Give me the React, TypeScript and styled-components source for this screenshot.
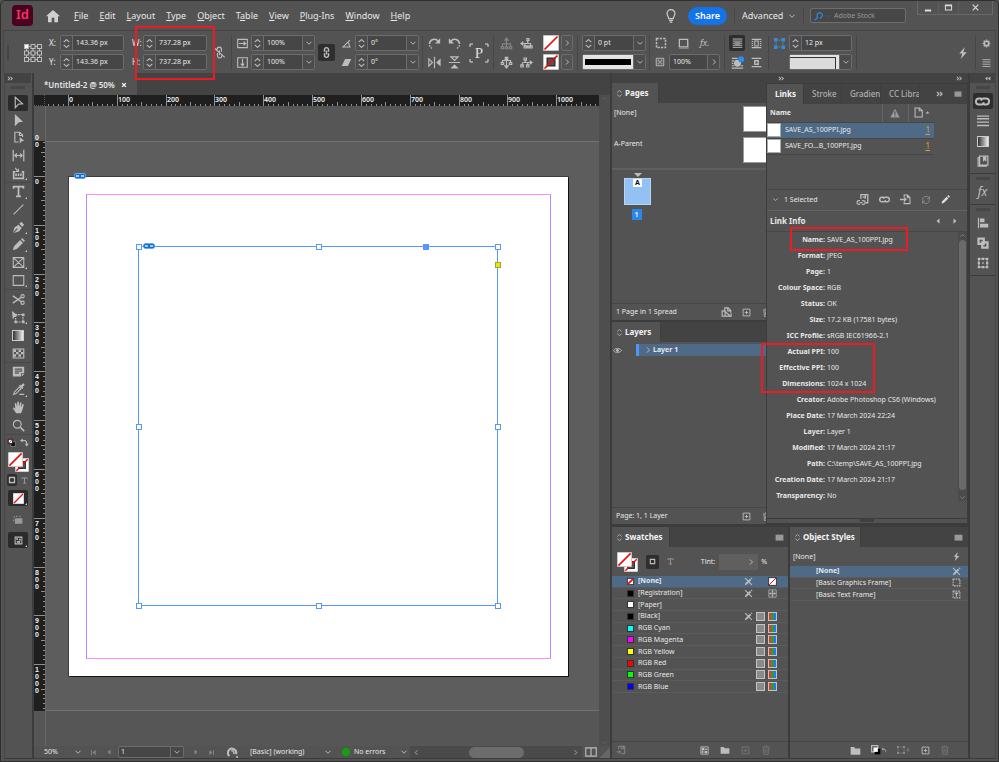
import React from 'react';
import styled, { createGlobalStyle } from 'styled-components';

const c = {
  bg: '#535353',
  dark: '#434343',
  line: '#464646',
  edge: '#3c3c3c',
  field: '#464646',
  fieldEdge: '#6c6c6c',
  text: '#e8e8e8',
  icon: '#bdbdbd',
  select: '#4f6a87',
  red: '#ec1c24',
  blue: '#5598f5',
};

const GlobalStyle = createGlobalStyle`
  *, *::before, *::after { box-sizing: border-box; }
  body { margin: 0; background: ${c.bg}; }
  body, button, input, select {
    font-family: "Noto Sans", "Open Sans", sans-serif;
    font-size: 7px;
    line-height: 10px;
    color: ${c.text};
  }
  button, input, select { margin: 0; padding: 0; border: 0; background: none; }
  ul, dl, dd, h2 { margin: 0; padding: 0; list-style: none; }
`;

/* ---------- icons ---------- */

const solid = { fill: 'currentColor', stroke: 'none' };

const glyphs: Record<string, React.ReactNode> = {
  down: <path d="M3 5.5l5 5 5-5" strokeWidth="1.900" />,
  right: <path d="M6 3l5 5-5 5" strokeWidth="1.900" />,
  left: <path d="M10 3L5 8l5 5" strokeWidth="1.900" />,
  up: <path d="M3 10.5l5-5 5 5" strokeWidth="1.900" />,
  spin: <path d="M3 5.5L8 1l5 4.500M3 10.500L8 15l5-4.500" strokeWidth="1.900" />,
  more: <path d="M2 4l4 4-4 4M8 4l4 4-4 4" strokeWidth="2.400" />,
  less: <path {...solid} d="M8 3.500v9L2.500 8zM14.500 3.500v9L9 8z" />,
  home: <path {...solid} d="M8 1L0 8.300h2.300V15H6.500v-5h3v5h4.200V8.300H16z" />,
  bulb: (
    <>
      <path d="M5.500 11C5.500 9 3.500 8 3.500 5.200a4.500 4.500 0 0 1 9 0C12.500 8 10.500 9 10.500 11z" />
      <path d="M5.800 13h4.400M6.500 15h3" />
    </>
  ),
  min: <path d="M3 12h10" strokeWidth="3" />,
  max: <path d="M2.500 3.500h11v9h-11zM2.500 5h11" strokeWidth="1.800" />,
  close: <path d="M3 3l10 10M13 3L3 13" strokeWidth="2" />,
  closeBold: <path d="M3 3l10 10M13 3L3 13" strokeWidth="3.400" />,
  search: <path d="M1 15l5-5M6 10a4.300 4.300 0 1 1 3 1.300" strokeWidth="1.800" />,
  unlink: <path d="M5 6V4a2.700 2.700 0 0 1 5.400 0v3M5.500 8.500V12a2.700 2.700 0 0 0 5.400 0v-1.500M8 5.500V11M1.500 2.500l13 11.500" />,
  chainV: <path d="M5.500 7V4.500a2.500 2.500 0 0 1 5 0V7M5.500 9v2.500a2.500 2.500 0 0 0 5 0V9M8 5.500v5" strokeWidth="1.800" />,
  chain: <path d="M7 4.800H4.200a3.200 3.200 0 0 0 0 6.400h2.600c1.500 0 2.500-1 2.700-2.400M9 11.200h2.800a3.200 3.200 0 0 0 0-6.400H9.200C7.700 4.800 6.700 5.800 6.500 7.200" strokeWidth="2" />,
  scaleX: <path d="M1 2h14v12H1zM3 8h9M9.500 5.500L12.500 8l-3 2.500" strokeWidth="1.600" />,
  scaleY: <path d="M1 1h14v14H1zM8 3v9M5.500 9.500L8 12.500l2.500-3" strokeWidth="1.600" />,
  angle: <path d="M13 3L3 13h11M10 6c2 2 2.300 4 2.300 7" strokeWidth="1.600" />,
  shear: <path {...solid} d="M6 3h9l-5 10H1z" />,
  cw: (
    <>
      <path d="M5 14A6.200 6.200 0 0 1 1.800 8" strokeWidth="1.600" strokeDasharray="2 1.200" />
      <path d="M1.800 8.500A6 6 0 0 1 12.500 5" strokeWidth="1.800" />
      <path {...solid} d="M15 1.500V8H8.500z" />
    </>
  ),
  ccw: (
    <>
      <path d="M11 14A6.200 6.200 0 0 0 14.200 8" strokeWidth="1.600" strokeDasharray="2 1.200" />
      <path d="M14.200 8.500A6 6 0 0 0 3.500 5" strokeWidth="1.800" />
      <path {...solid} d="M1 1.500V8h6.500z" />
    </>
  ),
  flipH: (
    <>
      <path d="M8 1v14M1 3.500v9L5.500 8z" />
      <path {...solid} d="M15.500 3v10L10 8z" />
    </>
  ),
  flipV: (
    <>
      <path d="M1 8h14M3.500 1h9L8 5.500z" />
      <path {...solid} d="M3 15.500h10L8 10z" />
    </>
  ),
  treeUp: (
    <>
      <path d="M8 4v9M3 12V8.500h10V12M1.500 12h3v2.500h-3zM6.500 12h3v2.500h-3zM11.500 12h3v2.500h-3z" />
      <path {...solid} d="M8 0l3.500 4.500h-7z" />
    </>
  ),
  treeDown: (
    <>
      <path d="M8 1v11M3 9V5.500h10V9M1.500 8h3v2.500h-3zM11.500 8h3v2.500h-3zM6.500 1.500h3v3h-3z" />
      <path {...solid} d="M8 16l3.500-4.500h-7z" />
    </>
  ),
  treeLeft: (
    <>
      <path d="M3 8h4M9.500 4v4M6 12V8h7v4M5 11h2.500v2.500H5zM9 11h2v2.500H9zM12.500 11H15v2.500h-2.500zM8.500 2h2.500v2.500H8.500z" />
      <path {...solid} d="M0 8l4-3v6z" />
    </>
  ),
  treeRight: (
    <>
      <path d="M13 8H3M6.500 4v4M3 12V8M9.500 8v4M1 11h3v2.500H1zM8 11h3v2.500H8zM5 2.500h3V5H5z" />
      <path {...solid} d="M16 8l-4-3v6z" />
    </>
  ),
  frameDots: (
    <>
      <path d="M2 2h12v12H2z" strokeDasharray="3 1.500" strokeWidth="1.600" />
      <path {...solid} d="M0 0h4v4H0zM12 0h4v4h-4zM0 12h4v4H0zM12 12h4v4h-4z" />
    </>
  ),
  shadowBox: (
    <>
      <path d="M2 2h12v11H2z" strokeWidth="1.800" />
      <path d="M1.500 15.200h13.500V4" stroke="#8a8a8a" strokeWidth="1.300" />
    </>
  ),
  opacity: (
    <>
      <path d="M2 2h12v12H2z" strokeWidth="1.500" />
      <path {...solid} opacity=".7" d="M4 4h3v3H4zM9 4h3v3H9zM6.500 6.500h3v3h-3zM4 9h3v3H4zM9 9h3v3H9z" />
    </>
  ),
  wrapNone: (
    <>
      <path d="M1 1.500h14M1 4.500h14M1 7.500h14M1 10.500h14M1 13.500h14" strokeWidth="1.400" />
      <path {...solid} fill="#8f8f8f" d="M4.500 5.200h7v5h-7z" />
    </>
  ),
  wrapBox: <path d="M1 2h14M1 14h14M1 5h2M1 8h2M1 11h2M13 5h2M13 8h2M13 11h2M5.500 4.500h5v7h-5z" strokeWidth="1.500" />,
  wrapShape: (
    <>
      <path d="M1 3h7M1 6h3M1 9h2M1 12h3M1 15h14M12 12h3" strokeWidth="1.400" />
      <circle {...solid} cx="8" cy="9" r="4.300" />
      <circle cx="12.500" cy="4" r="3.800" fill="#2a8cf0" stroke="none" />
    </>
  ),
  wrapJump: <path d="M1 2h14M1 14h14M5.500 5.500h5v5h-5z" strokeWidth="2" />,
  blueFrame: (
    <>
      <path d="M3 3h10v10H3z" stroke="#8f8f8f" strokeDasharray="2 1.500" />
      <path fill="#2a8cf0" stroke="none" d="M0 0h5v5H0zM11 0h5v5h-5zM0 11h5v5H0zM11 11h5v5h-5z" />
    </>
  ),
  bolt: <path {...solid} d="M10.500 0L3 8.500h4L5 16l8-9H8.500z" />,
  gear: (
    <>
      <circle cx="8" cy="8" r="4" strokeWidth="3" />
      <path d="M8 1v2M8 13v2M1 8h2M13 8h2M3 3l1.500 1.500M11.500 11.500L13 13M13 3l-1.500 1.500M4.500 11.500L3 13" strokeWidth="2.200" />
    </>
  ),
  menu: <path d="M1 3h14M1 7h14M1 11h14M1 15h14" strokeWidth="1.500" />,
  panelMenu: <path {...solid} d="M1 3h14v10.500H1z" />,
  arrowOpen: <path d="M4 1.500l9 8-5 .5-4 4.500z" />,
  arrowFill: <path {...solid} d="M3.500 0l10 9.500-5 .5-5 5z" />,
  pageTool: (
    <>
      <path d="M13 7.500V5L9.500 1.500H3.500v12H8M9 2v3.500h4" />
      <path {...solid} d="M9.500 7.500L15 12l-3 .5-2.500 3z" />
    </>
  ),
  gap: <path d="M1.500 1v14M14.500 1v14M4 8h8M6 5.500L3.500 8 6 10.500M10 5.500L12.500 8 10 10.500" strokeWidth="1.500" />,
  collect: (
    <>
      <path d="M2 6v8h12V6M5 11V8M8 11V8M11 11V8M1 6h3M12 6h3" strokeWidth="1.900" />
      <path d="M4 1l3 4M8 2v3.500H4.500" />
    </>
  ),
  type: <path d="M2 4.500V2h12v2.500M8 2v12M5 14h6" strokeWidth="2.200" />,
  line: <path d="M2 14L14 2" strokeWidth="1.400" />,
  pen: (
    <>
      <path {...solid} d="M1 15L3 8l5-3.500 4 4L8.500 13zM9 3.500L11.500 1 15 4.500 12.500 7z" />
      <path d="M1.500 14.500L6.500 9.500" stroke="#535353" />
    </>
  ),
  pencil: <path {...solid} d="M1 15l1.500-5L10 2.500 13.500 6 6 13.500zM11 1.500L12.500 0 16 3.500 14.500 5z" />,
  rectX: <path d="M1.500 2h13v12h-13zM1.500 2l13 12M14.500 2l-13 12" strokeWidth="1.300" />,
  rect: <path d="M1.500 2h13v12h-13z" strokeWidth="1.300" />,
  scissors: (
    <>
      <circle cx="13" cy="4" r="2" />
      <circle cx="13" cy="12" r="2" />
      <path d="M1 3.500l10.500 7.300M1 12.500L11.500 5.200" strokeWidth="1.700" />
    </>
  ),
  transform: (
    <>
      <path d="M4.500 4.500h9v9h-9z" strokeDasharray="2 1" />
      <path {...solid} d="M0 0l7 5.500-3 .5-3 4zM12.500 3h3v3h-3zM12.500 12h3v3h-3zM3 12h3v3H3z" />
    </>
  ),
  checker: (
    <>
      <path d="M1.500 2.500h13v11h-13z" />
      <path {...solid} d="M2 3h3v3H2zM8 3h3v3H8zM5 6h3v3H5zM11 6h3v3h-3zM2 9h3v3H2zM8 9h3v3H8z" />
    </>
  ),
  note: (
    <>
      <path {...solid} d="M1 2h14v8h-4v4H1zM12 11h3l-3 3z" />
      <path d="M3.500 5h9M3.500 7.500h9M3.500 10h5" stroke="#535353" />
    </>
  ),
  dropper: (
    <>
      <path d="M2 14l1-3 6-6 2 2-6 6zM9 14h6" />
      <path {...solid} d="M8.500 3.500L10 2l1 1 2-2c1.500-1.500 3 .5 2 2l-2 2 1 1-1.500 1.500z" />
    </>
  ),
  hand: <path {...solid} d="M5 15L1 8.500c.5-1 1.500-.5 3 1L3.500 3c.8-1 1.700-.5 1.900.5L6.300 7l.2-5.500c.5-1 1.600-1 2 0L8.800 7l1.200-5c.7-.8 1.700-.4 1.700.6L11 7.500l2-3.500c1-.6 1.700.2 1.400 1.200L12.500 12 11 15z" />,
  zoom: (
    <>
      <circle cx="6.500" cy="6.500" r="4.800" />
      <path d="M10.200 10.200L15 15" strokeWidth="2" />
    </>
  ),
  defaults: (
    <>
      <path d="M6 6h7.500v7.500H6z" fill="#111" stroke="#999" strokeWidth="1" />
      <path d="M2 2h7v7H2z" fill="#fff" stroke="#111" strokeWidth="1.500" />
      <path d="M3 8l5-5" stroke="#e33" />
    </>
  ),
  swap: (
    <>
      <path d="M4 4.500h4c3 0 4 1.500 4 6" strokeWidth="1.800" />
      <path {...solid} d="M5 1v7L0 4.500zM8.500 10h7L12 15z" />
    </>
  ),
  square: <path d="M3 3h10v10H3z" strokeWidth="2.600" />,
  view: <path {...solid} d="M3 5h12v9H3zM1 2h2v2H1zM5 1h2v2H5zM10 1h2v2h-2zM0 7h2v2H0z" />,
  screen: (
    <>
      <path d="M2 2h12v12H2z" strokeWidth="1.800" />
      <path {...solid} d="M4 4h3v3H4zM9 5h3v3H9zM5 9h6v3H5z" />
    </>
  ),
  plus: <path d="M2 2h12v12H2zM8 5v6M5 8h6" strokeWidth="1.600" />,
  trash: <path d="M2 3.500h12M6 3V1.500h4V3M3.500 4l.8 11h7.400l.8-11M6.500 6v7M9.500 6v7" strokeWidth="1.300" />,
  pageSize: <path d="M1.500 6.500h4v7h-4zM5.500 13.500h8V9.500M5 8V2.500h4.500L13 6v3M9 3v3.500h3.500M6 8l6 5" strokeWidth="1.500" />,
  eye: (
    <>
      <path d="M1 8c3-5 11-5 14 0-3 5-11 5-14 0z" strokeWidth="1.600" />
      <circle {...solid} cx="8" cy="8" r="2.600" />
    </>
  ),
  warn: (
    <>
      <path {...solid} d="M8 1l7.500 14H.5z" />
      <path d="M8 5.500v5M8 12v1.500" stroke="#444" strokeWidth="1.600" />
    </>
  ),
  page: <path d="M3 1.500h6.500L13.500 5v9.500H3zM9 2v3.500h4" strokeWidth="1.500" />,
  triUp: <path {...solid} d="M2 11h12L8 4z" />,
  cloudLink: (
    <>
      <path d="M6 7V2h8.500v10H12M8 5h3.500M11.500 2v5" strokeWidth="1.600" />
      <path d="M5 9.500H3.500a2.200 2.200 0 0 0 0 4.500H5M7.500 9.500H9a2.200 2.200 0 0 1 0 4.500H7.500M4.500 11.800H8" strokeWidth="1.500" />
    </>
  ),
  goTo: (
    <>
      <path d="M6 5V1.500h5L14.500 5v9H6V11M10.500 2v3.500H14" strokeWidth="1.500" />
      <path d="M0 8h7" strokeWidth="2" />
      <path {...solid} d="M6 4.500L10 8l-4 3.500z" />
    </>
  ),
  refresh: <path d="M2.500 9A5.700 5.700 0 0 1 13 5M13.500 7A5.700 5.700 0 0 1 3 11M13.500 2v4h-4M2.500 14v-4h4" strokeWidth="1.500" />,
  edit: <path {...solid} d="M1 15l1-4 8-8 3 3-8 8zM11 2l2-2 3 3-2 2z" />,
  triL: <path {...solid} d="M12 1v14L4 8z" />,
  triR: <path {...solid} d="M4 1v14l8-7z" />,
  firstP: (
    <>
      <path d="M3.500 2v12" strokeWidth="2" />
      <path {...solid} d="M13 2v12L5.500 8z" />
    </>
  ),
  lastP: (
    <>
      <path d="M12.500 2v12" strokeWidth="2" />
      <path {...solid} d="M3 2v12l7.500-6z" />
    </>
  ),
  preflight: (
    <>
      <path d="M3.500 13A6 6 0 1 1 13 10.500" strokeWidth="3" />
      <path d="M6 5.500c3-1 4.500 1 4 5" strokeWidth="2.200" />
      <path {...solid} d="M13.500 13h2.500v2.500h-2.500z" />
    </>
  ),
  split: <path d="M1 2.500h14v11H1zM8 2.500v11" strokeWidth="1.500" />,
  noEdit: (
    <>
      <path {...solid} d="M1.500 14.500l1-3.500 8-8 2.500 2.500-8 8zM12 2l1.500-1L15 2.500 14 4z" />
      <path d="M2 2l12 12" strokeWidth="1.800" />
    </>
  ),
  registration: <path d="M1.500 1.500h13v13h-13zM8 1.500v13M1.500 8h13M8 4.500a3.500 3.500 0 1 0 .01 0" strokeWidth="1.300" />,
  strokeLines: <path d="M0 1.500h16M0 5h16M0 9.500h16M0 14h16" strokeWidth="1.900" />,
  book: (
    <>
      <path d="M3.500 1.500h11v12h-11zM3.500 3.500h-2v11.500h11v-1.500" strokeWidth="1.600" />
      <path {...solid} d="M8 2h4.500v7l-2.200-2L8 9z" />
    </>
  ),
  align: (
    <>
      <path d="M2 1v14" strokeWidth="1.600" />
      <path {...solid} d="M4 2h6v5H4zM4 9h11v5H4z" />
    </>
  ),
  pathfinder: <path d="M2 2h7v7H2zM7 7h7v7H7z" strokeWidth="3" />,
  transformBox: (
    <>
      <path d="M2.500 2.500h11v11h-11z" strokeWidth="1.300" />
      <path {...solid} d="M1 1h3v3H1zM6.500 1h3v3h-3zM12 1h3v3h-3zM1 6.500h3v3H1zM12 6.500h3v3h-3zM1 12h3v3H1zM6.500 12h3v3h-3zM12 12h3v3h-3zM7 7h2v2H7z" />
    </>
  ),
  folder: <path {...solid} d="M1 3h5l1.500 2H15v9H1z" />,
  importIcon: <path d="M4 6V2h10v12H8M8 2v4h4V2M1 11h6M4.500 8.500L7.500 11l-3 2.500" strokeWidth="1.600" />,
  swatchView: (
    <>
      <path d="M1.500 1.500h13v13h-13z" strokeWidth="1.500" />
      <path {...solid} d="M3 3h5v5H3zM9 5h4v2H9zM3 9h3v4H3zM8 9h5v4H8z" />
    </>
  ),
  frameT: (
    <>
      <path d="M2 2h12v12H2z" strokeWidth="1.800" strokeDasharray="3 1.500" />
      <path d="M4.500 5.500h7M8 5.500V12" strokeWidth="2" />
    </>
  ),
  frameG: <path d="M2 2h12v12H2z" strokeWidth="2" strokeDasharray="3 1.500" />,
  clearO: (
    <>
      <path d="M1 1h10v10H1z" fill="#555" strokeWidth="1.800" />
      <path fill="#000" stroke="none" d="M6 6h9v9H6z" />
      <path fill="#fff" stroke="none" d="M4 4h7v7H4z" />
    </>
  ),
  undo: <path d="M4 2v5h5M4 7c6-4 11 1 7 7" strokeWidth="1.800" />,
  grid9: (
    <>
      <path d="M3.500 3.500h13v13h-13zM10 3.500v13M3.500 10h13" strokeWidth="1" />
      {[1.5, 8, 14.5].map((y) =>
        [1.5, 8, 14.5].map((x) => (
          <rect key={`${x}-${y}`} x={x} y={y} width="4" height="4" strokeWidth="1" fill={x + y === 3 ? '#fff' : '#535353'} />
        )),
      )}
    </>
  ),
};

const Svg = styled.svg<{ $color?: string }>`
  display: block;
  flex: none;
  color: ${(p) => p.$color || c.icon};
  fill: none;
  stroke: currentColor;
`;

function Icon({ n, s = 12, color, box = 16 }: { n: string; s?: number; color?: string; box?: number }) {
  return (
    <Svg viewBox={`0 0 ${box} ${box}`} width={s} height={s} strokeWidth={1.4} $color={color} aria-hidden="true">
      {glyphs[n]}
    </Svg>
  );
}

function NoneSwatch({ s = 16, ring = false, edge = '#8a8a8a', slash = 1.7 }: { s?: number; ring?: boolean; edge?: string; slash?: number }) {
  return (
    <Svg viewBox="0 0 16 16" width={s} height={s} aria-hidden="true">
      <rect width="16" height="16" fill="#fff" stroke={edge} strokeWidth={edge === '#8a8a8a' ? 1 : 4} />
      {ring && <rect x="4" y="4" width="8" height="8" fill="#535353" stroke="#222" />}
      <path d="M1.500 14.500L14.500 1.500" stroke="#f00808" strokeWidth={slash} />
    </Svg>
  );
}

/* ---------- shell ---------- */

const Shell = styled.div`
  display: flex;
  flex-direction: column;
  min-width: 980px;
  height: 100vh;
  min-height: 700px;
  overflow: hidden;
  background: ${c.bg};
  border: 1px solid #2f2f2f;
  border-radius: 5px 5px 0 0;
  position: relative;
`;

const IconButton = styled.button<{ $on?: boolean; $w?: number; $h?: number }>`
  display: flex;
  flex: none;
  align-items: center;
  justify-content: center;
  width: ${(p) => (p.$w ? `${p.$w}px` : 'auto')};
  height: ${(p) => (p.$h ? `${p.$h}px` : 'auto')};
  border-radius: 2px;
  background: ${(p) => (p.$on ? '#2e2e2e' : 'none')};
`;

const Spacer = styled.div`
  flex: 1;
`;

const TitleBar = styled.header`
  display: flex;
  align-items: center;
  height: 29px;
  flex: none;
  padding-left: 11px;
`;

const Logo = styled.div`
  width: 21px;
  height: 21px;
  margin-right: 13px;
  border-radius: 4px;
  background: #49021f;
  color: #ff3366;
  font-size: 13px;
  font-weight: 600;
  line-height: 19px;
  text-align: center;
`;

const MenuBar = styled.nav`
  display: flex;
  gap: 11px;
  margin-left: 14px;
`;

const MenuButton = styled.button`
  font-size: 9px;
  line-height: 12px;
  white-space: nowrap;
  u {
    text-underline-offset: 1px;
  }
`;

const Share = styled.button`
  width: 39px;
  height: 18px;
  margin: 0 7px 0 10px;
  border-radius: 9px;
  background: #1473e6;
  font-size: 9px;
  font-weight: 600;
  color: #fff;
`;

const Divider = styled.span<{ $h?: number; $l?: number; $r?: number }>`
  flex: none;
  width: 1px;
  height: ${(p) => p.$h || 34}px;
  margin: 0 ${(p) => p.$r || 0}px 0 ${(p) => p.$l || 0}px;
  background: ${c.line};
`;

const SelectWrap = styled.span<{ $ml?: number; $mr?: number; $gap?: number }>`
  display: flex;
  align-items: center;
  gap: ${(p) => p.$gap || 0}px;
  margin: 0 ${(p) => p.$mr || 0}px 0 ${(p) => p.$ml || 0}px;
`;

const PlainSelect = styled.select<{ $size?: number; $w?: number }>`
  appearance: none;
  width: ${(p) => (p.$w ? `${p.$w}px` : 'auto')};
  font-size: ${(p) => p.$size || 7}px;
  line-height: 12px;
`;

const SearchBox = styled.label`
  display: flex;
  align-items: center;
  gap: 3px;
  width: 96px;
  height: 15px;
  margin-left: 6px;
  padding-left: 3px;
  border: 1px solid #6e6e6e;
  border-radius: 2px;
  background: #474747;
  input {
    width: 70px;
    outline: 0;
  }
  input::placeholder {
    color: #999;
  }
`;

const WindowButtons = styled.div`
  display: flex;
  align-self: flex-start;
  height: 14px;
  margin: 0 5px 0 11px;
  border: 1px solid #686868;
  border-top: 0;
  button + button {
    border-left: 1px solid #5f5f5f;
  }
`;

/* ---------- control bar ---------- */

const ControlBar = styled.section`
  display: flex;
  align-items: center;
  flex: none;
  height: 43px;
  margin: 0 2px;
  padding: 1px 0 0 3px;
  border: 1px solid #454545;
  border-bottom: 0;
`;

const Grip = styled.span`
  width: 2px;
  height: 15px;
  background: #444;
`;

const Group = styled.div<{ $ml?: number; $gap?: number }>`
  position: relative;
  display: grid;
  flex: none;
  grid-auto-flow: column;
  grid-template-rows: 16px 16px;
  row-gap: 3px;
  column-gap: ${(p) => p.$gap || 0}px;
  align-items: center;
  margin-left: ${(p) => p.$ml || 0}px;
`;

const Line = styled.div<{ $gap?: number }>`
  display: flex;
  align-items: center;
  gap: ${(p) => p.$gap || 0}px;
`;

const Combo = styled.div<{ $w?: number }>`
  display: flex;
  width: ${(p) => p.$w || 64}px;
  height: 16px;
  border: 1px solid ${c.fieldEdge};
  border-radius: 2px;
  background: ${c.field};
  input {
    flex: 1;
    width: 0;
    min-width: 0;
    padding-left: 3px;
  }
  button {
    display: flex;
    align-items: center;
    justify-content: center;
    width: 12px;
    background: #4c4c4c;
  }
  button:first-child {
    border-right: 1px solid ${c.fieldEdge};
  }
  button:last-child {
    border-left: 1px solid ${c.fieldEdge};
  }
`;

const FieldLabel = styled.label`
  width: 11px;
  font-size: 8px;
`;

const Stroke = styled.span<{ $solid?: boolean }>`
  flex: 1;
  border: solid #e4e4e4;
  border-width: ${(p) => (p.$solid ? '4px 2px' : '2px 3px 0 0')};
  background: ${(p) => (p.$solid ? '#000' : '#dcdcdc')};
  box-shadow: ${(p) => (p.$solid ? 'none' : 'inset -1px 1px 0 #333')};
`;

const SmallBox = styled.button`
  display: flex;
  align-items: center;
  justify-content: center;
  width: 12px;
  height: 16px;
  border: 1px solid ${c.fieldEdge};
  border-radius: 2px;
`;

const Fx = styled.span<{ $size?: number }>`
  font-style: italic;
  font-size: ${(p) => p.$size || 9}px;
  line-height: 12px;
  color: ${c.icon};
`;

const PMark = styled.span`
  position: relative;
  width: 20px;
  height: 20px;
  margin-left: 8px;
  flex: none;
  font: 15px/20px "Liberation Serif", serif;
  text-align: center;
  color: #ddd;
  svg {
    position: absolute;
    inset: 0;
  }
`;

const RedBox = styled.span<{ $t: number; $r: number; $b: number; $l: number }>`
  position: absolute;
  z-index: 5;
  top: ${(p) => p.$t}px;
  right: ${(p) => p.$r}px;
  bottom: ${(p) => p.$b}px;
  left: ${(p) => p.$l}px;
  border: 2px solid ${c.red};
  pointer-events: none;
`;

const RefPoint = styled.button`
  margin-left: 14px;
`;

const RightPad = styled.span`
  width: 4px;
`;

const ChainToggle = styled.button`
  display: flex;
  align-items: center;
  justify-content: center;
  flex: none;
  width: 17px;
  height: 17px;
  margin-left: 3px;
  border-radius: 2px;
  background: #2e2e2e;
`;

function NumberField({ label, value, w, drop, spin = true, icon = 'down' }: { label: string; value: string; w?: number; drop?: boolean; spin?: boolean; icon?: string }) {
  return (
    <Combo $w={w}>
      {spin && (
        <button aria-label={`Step ${label}`}>
          <Icon n="spin" s={9} />
        </button>
      )}
      <input id={label} aria-label={label} defaultValue={value} />
      {drop && (
        <button aria-label={`${label} options`}>
          <Icon n={icon} s={8} />
        </button>
      )}
    </Combo>
  );
}

function Controls() {
  return (
    <ControlBar aria-label="Control">
      <Grip />
      <RefPoint aria-label="Reference point">
        <Icon n="grid9" s={20} box={20} />
      </RefPoint>
      <Group $ml={6}>
        <FieldLabel htmlFor="X">X:</FieldLabel>
        <FieldLabel htmlFor="Y">Y:</FieldLabel>
        <NumberField label="X" value="143.36 px" />
        <NumberField label="Y" value="143.36 px" />
      </Group>
      <Group $ml={8}>
        <FieldLabel htmlFor="W">W:</FieldLabel>
        <FieldLabel htmlFor="H">H:</FieldLabel>
        <NumberField label="W" value="737.28 px" />
        <NumberField label="H" value="737.28 px" />
        <RedBox $t={-9} $r={-8} $b={-10} $l={3} />
      </Group>
      <IconButton $w={24} aria-label="Unlinked dimensions">
        <Icon n="unlink" s={13} />
      </IconButton>
      <Divider $r={5} />
      <Group $gap={3}>
        <Icon n="scaleX" s={11} />
        <Icon n="scaleY" s={11} />
        <NumberField label="Scale X" value="100%" drop />
        <NumberField label="Scale Y" value="100%" drop />
      </Group>
      <ChainToggle aria-label="Constrain proportions">
        <Icon n="chainV" s={13} />
      </ChainToggle>
      <Group $ml={6} $gap={3}>
        <Icon n="angle" s={11} />
        <Icon n="shear" s={11} />
        <NumberField label="Rotation" value="0°" drop />
        <NumberField label="Shear" value="0°" drop />
      </Group>
      <Divider $l={3} $r={5} />
      <Group $gap={7}>
        <Icon n="cw" s={13} />
        <Icon n="flipH" s={13} />
        <Icon n="ccw" s={13} />
        <Icon n="flipV" s={13} />
      </Group>
      <PMark>
        P
        <Svg viewBox="0 0 20 20" width={20} height={20} $color="#ddd" aria-hidden="true">
          <path d="M1 4V1h3M16 1h3v3M19 16v3h-3M4 19H1v-3" />
        </Svg>
      </PMark>
      <Divider $l={4} $r={6} />
      <Group $gap={7}>
        <Icon n="treeUp" s={13} color="#858585" />
        <Icon n="treeDown" s={13} />
        <Icon n="treeLeft" s={13} />
        <Icon n="treeRight" s={13} />
      </Group>
      <Group $ml={10} $gap={2}>
        <NoneSwatch />
        <NoneSwatch ring />
        <SmallBox aria-label="Fill options">
          <Icon n="right" s={8} />
        </SmallBox>
        <SmallBox aria-label="Stroke options">
          <Icon n="right" s={8} />
        </SmallBox>
      </Group>
      <Divider $l={4} $r={4} />
      <Group>
        <NumberField label="Stroke weight" value="0 pt" drop />
        <Combo>
          <Stroke $solid />
          <button aria-label="Stroke type">
            <Icon n="down" s={8} />
          </button>
        </Combo>
      </Group>
      <Divider $l={3} $r={5} />
      <Group>
        <Line $gap={11}>
          <Icon n="frameG" s={12} />
          <Icon n="shadowBox" s={11} />
          <Fx>fx.</Fx>
        </Line>
        <Line $gap={4}>
          <Icon n="opacity" s={10} />
          <NumberField label="Opacity" value="100%" w={51} spin={false} drop icon="right" />
        </Line>
      </Group>
      <Divider $l={4} $r={4} />
      <Group $gap={6}>
        <IconButton $w={16} $h={16} $on aria-label="No text wrap">
          <Icon n="wrapNone" s={11} />
        </IconButton>
        <IconButton $w={16} aria-label="Wrap around shape">
          <Icon n="wrapShape" s={13} />
        </IconButton>
        <Icon n="wrapBox" s={11} />
        <Icon n="wrapJump" s={11} />
      </Group>
      <Divider $l={6} $r={5} />
      <Group $gap={4}>
        <Icon n="blueFrame" s={11} />
        <span />
        <NumberField label="Corner size" value="12 px" w={63} />
        <Combo $w={63}>
          <Stroke />
          <button aria-label="Corner shape">
            <Icon n="down" s={8} />
          </button>
        </Combo>
      </Group>
      <Divider $l={4} />
      <Spacer />
      <IconButton $w={24} aria-label="Quick apply">
        <Icon n="bolt" s={12} />
      </IconButton>
      <Divider $r={5} />
      <Group>
        <IconButton $w={10} aria-label="Settings">
          <Icon n="gear" s={9} />
        </IconButton>
        <IconButton $w={10} aria-label="Control menu">
          <Icon n="menu" s={9} />
        </IconButton>
      </Group>
      <RightPad />
    </ControlBar>
  );
}

/* ---------- tools ---------- */

const Workspace = styled.main`
  display: flex;
  flex: 1;
  min-height: 0;
  margin: 0 2px 2px 3px;
  border-bottom: 1px solid ${c.edge};
`;

const ToolColumn = styled.aside`
  display: flex;
  flex-direction: column;
  align-items: center;
  width: 30px;
  flex: none;
  padding-right: 1px;
  border-left: 1px solid ${c.line};
  border-right: 2px solid ${c.edge};
`;

const ToolHead = styled.div`
  display: flex;
  align-items: center;
  align-self: stretch;
  height: 10px;
  padding-left: 2px;
  background: ${c.dark};
`;

const GripH = styled.span`
  width: 14px;
  height: 3px;
  margin: 3px 0 4px;
  background: #464646;
`;

const Gap = styled.div<{ $h: number }>`
  height: ${(p) => p.$h}px;
  flex: none;
`;

const ToolGroup = styled.div<{ $h: number }>`
  display: grid;
  grid-auto-rows: 1fr;
  align-items: center;
  justify-items: center;
  height: ${(p) => p.$h}px;
  width: 26px;
  & + & {
    border-top: 1px solid #484848;
  }
`;

const Tool = styled.button<{ $on?: boolean; $corner?: boolean }>`
  position: relative;
  display: flex;
  align-items: center;
  justify-content: center;
  width: 20px;
  height: 16px;
  border-radius: 2px;
  background: ${(p) => (p.$on ? '#2b2b2b' : 'none')};
  &::after {
    content: '';
    display: ${(p) => (p.$corner ? 'block' : 'none')};
    position: absolute;
    right: 1px;
    bottom: 1px;
    border: 1px solid #ccc;
    border-left-color: transparent;
    border-top-color: transparent;
  }
`;

const FillStroke = styled.div`
  display: grid;
  grid-template: 6px 8px 6px / 7px 8px 6px;
  margin: 2px 0;
  svg:first-child {
    grid-area: 2 / 2 / 4 / 4;
  }
  svg:last-child {
    grid-area: 1 / 1 / 3 / 3;
  }
`;

const GradientIcon = styled.span`
  width: 12px;
  height: 11px;
  border: 1px solid #ccc;
  background: linear-gradient(90deg, #333, #eee);
`;

const toolGroups: { h: number; tools: [string, string, boolean?][] }[] = [
  { h: 88, tools: [['arrowOpen', 'Selection'], ['arrowFill', 'Direct selection'], ['pageTool', 'Page'], ['gap', 'Gap'], ['collect', 'Content collector', true]] },
  { h: 107, tools: [['type', 'Type', true], ['line', 'Line'], ['pen', 'Pen', true], ['pencil', 'Pencil', true], ['rectX', 'Rectangle frame', true], ['rect', 'Rectangle', true]] },
  { h: 73, tools: [['scissors', 'Scissors'], ['transform', 'Free transform', true], ['gradient', 'Gradient swatch'], ['checker', 'Gradient feather']] },
  { h: 72, tools: [['note', 'Note'], ['dropper', 'Colour theme', true], ['hand', 'Hand'], ['zoom', 'Zoom']] },
];

function Tools() {
  return (
    <ToolColumn aria-label="Tools">
      <ToolHead>
        <Icon n="more" s={7} />
      </ToolHead>
      <GripH />
      <Gap $h={1} />
      {toolGroups.map((g) => (
        <ToolGroup key={g.h} $h={g.h}>
          {g.tools.map(([n, label, corner]) => (
            <Tool key={n} $on={n === 'arrowOpen'} $corner={corner} aria-label={label}>
              {n === 'gradient' ? <GradientIcon /> : <Icon n={n} s={13} />}
            </Tool>
          ))}
        </ToolGroup>
      ))}
      <ToolGroup $h={16}>
        <Line $gap={3}>
          <Icon n="defaults" s={10} />
          <Icon n="swap" s={9} />
        </Line>
      </ToolGroup>
      <FillStroke>
        <NoneSwatch s={14} ring />
        <NoneSwatch s={15} />
      </FillStroke>
      <Line $gap={3}>
        <IconButton $on $w={10} $h={12} aria-label="Formatting affects container">
          <Icon n="square" s={8} />
        </IconButton>
        <IconButton $w={10} $h={12} aria-label="Formatting affects text">
          <Icon n="type" s={7} color="#999" />
        </IconButton>
      </Line>
      <Gap $h={4} />
      <Tool $on $corner aria-label="Apply none">
        <NoneSwatch s={11} />
      </Tool>
      <Gap $h={6} />
      <Tool aria-label="View options">
        <Icon n="view" s={10} color="#999" />
      </Tool>
      <Gap $h={4} />
      <Tool $on $corner aria-label="Screen mode">
        <Icon n="screen" s={9} />
      </Tool>
    </ToolColumn>
  );
}

/* ---------- document ---------- */

const DocColumn = styled.section`
  display: flex;
  flex-direction: column;
  flex: 1;
  min-width: 0;
  border-right: 2px solid ${c.edge};
`;

const DocTabs = styled.div`
  display: flex;
  height: 22px;
  flex: none;
  background: ${c.dark};
`;

const DocTab = styled.div`
  display: flex;
  align-items: center;
  gap: 6px;
  padding: 2px 10px 0;
  background: ${c.bg};
  font-size: 8px;
  font-weight: 600;
`;

const DocBody = styled.div`
  display: grid;
  flex: 1;
  min-height: 0;
  grid-template-columns: 11px 1fr 11px;
  grid-template-rows: 11px 1fr;
`;

const RulerCorner = styled.div`
  background: #1f1f1f;
  border: 1px dotted #555;
  border-width: 0 1px 1px 0;
`;

const RulerX = styled.div`
  overflow: hidden;
  background: #1f1f1f;
`;

const RulerY = styled.div`
  overflow: hidden;
  background: #565656;
`;

const ScrollY = styled.div`
  display: flex;
  flex-direction: column;
  justify-content: space-between;
  align-items: center;
  grid-row: 1 / span 2;
  grid-column: 3;
  background: #4e4e4e;
`;

const RulerText = styled.text<{ $v?: boolean }>`
  font: ${(p) => (p.$v ? '700 7px "Liberation Sans"' : '600 7px "Noto Sans"')}, sans-serif;
  fill: #f0f0f0;
  stroke: none;
`;

const PX_PER_UNIT = 500 / 1024;
const ORIGIN_X = 24;
const ORIGIN_Y = 71;
const ticks = (from: number, to: number) => Array.from({ length: (to - from) / 10 + 1 }, (_, i) => from + i * 10);
const tickLength = (v: number) => (v % 100 === 0 ? 11 : v % 50 === 0 ? 4 : 2);

const tickPath = (vals: number[], origin: number, vertical: boolean) =>
  vals
    .map((v) => {
      const p = Math.round(origin + v * PX_PER_UNIT) - 0.5;
      const l = tickLength(v);
      return vertical ? `M${11 - l} ${p}h${l}` : `M${p} ${11 - l}v${l}`;
    })
    .join('');

function HorizontalRuler() {
  return (
    <RulerX>
      <Svg width={554} height={11} $color="#8f8f8f" strokeWidth={1} aria-hidden="true">
        <path d={tickPath(ticks(-40, 1080), ORIGIN_X, false)} />
        {Array.from({ length: 11 }, (_, i) => (
          <RulerText key={i} x={Math.round(ORIGIN_X + i * 100 * PX_PER_UNIT)} y={7}>
            {i * 100}
          </RulerText>
        ))}
      </Svg>
    </RulerX>
  );
}

function VerticalRuler() {
  return (
    <RulerY>
      <Svg width={11} height={605} $color="#8f8f8f" strokeWidth={1} aria-hidden="true">
        <rect y={35} width={11} height={570} fill="#1f1f1f" stroke="none" />
        <path d={tickPath(ticks(-70, 1090), ORIGIN_Y, true)} />
        <RulerText $v x={1} y={34}>0</RulerText>
        <RulerText $v x={1} y={41}>0</RulerText>
        {Array.from({ length: 11 }, (_, i) =>
          String(i * 100)
            .split('')
            .map((d, k) => (
              <RulerText $v key={`${i}-${k}`} x={1} y={Math.round(ORIGIN_Y + i * 100 * PX_PER_UNIT) + 7 + k * 7}>
                {d}
              </RulerText>
            )),
        )}
      </Svg>
    </RulerY>
  );
}

const Canvas = styled.div`
  position: relative;
  overflow: hidden;
  background: #565656;
  border-left: 1px solid #696969;
`;

const Pasteboard = styled.div`
  position: absolute;
  top: 35px;
  left: 0;
  right: 0;
  height: 570px;
  border: 1px solid #727272;
  border-width: 1px 0;
  background: #5d5d5d;
`;

const Sheet = styled.div`
  position: absolute;
  top: 35px;
  left: 23px;
  width: 499px;
  height: 499px;
  background: #fff;
  box-shadow: 1px 1px 0 #111, 0 0 0 1px #3c3c3c;
`;

const Margins = styled.div`
  position: absolute;
  inset: 17px;
  border: 1px solid #ff8af8;
  border-left-color: #b98af5;
  border-right-color: #b98af5;
`;

const Frame = styled.div`
  position: absolute;
  top: 69px;
  left: 69px;
  width: 360px;
  height: 360px;
  border: 1px solid ${c.blue};
`;

const Handle = styled.i<{ $x: number; $y: number; $fill?: string }>`
  position: absolute;
  top: ${(p) => p.$y - 4}px;
  left: ${(p) => p.$x - 4}px;
  width: 6px;
  height: 6px;
  border: 1px solid ${(p) => (p.$fill === '#e8e800' ? '#a8a030' : c.blue)};
  background: ${(p) => p.$fill || '#fff'};
`;

const LinkBadge = styled.span<{ $x: number; $y: number }>`
  position: absolute;
  top: ${(p) => p.$y}px;
  left: ${(p) => p.$x}px;
`;

const handles: [number, number, string?][] = [
  [1, 1], [181, 1], [288, 1, c.blue], [360, 1], [1, 181], [360, 181], [1, 360], [181, 360], [360, 360], [360, 19, '#e8e800'],
];

function Badge({ x, y }: { x: number; y: number }) {
  return (
    <LinkBadge $x={x} $y={y}>
      <Svg viewBox="0 0 12 6" width={12} height={6} $color="#1672cf" aria-hidden="true">
        <rect x="0" y="0" width="12" height="6" rx="3" fill="#a9d0f8" stroke="none" />
        <rect x="1" y="1.200" width="5.500" height="3.600" rx="1.800" strokeWidth="1.400" />
        <rect x="5.500" y="1.200" width="5.500" height="3.600" rx="1.800" strokeWidth="1.400" />
      </Svg>
    </LinkBadge>
  );
}

const StatusBar = styled.footer`
  display: flex;
  align-items: center;
  height: 12px;
  flex: none;
  background: ${c.bg};
`;

const PageField = styled.div`
  display: flex;
  width: 66px;
  height: 12px;
  border: 1px solid ${c.fieldEdge};
  border-radius: 2px;
  background: ${c.field};
  margin: 0 7px 0 5px;
  input {
    flex: 1;
    width: 0;
    padding-left: 2px;
  }
  button {
    display: flex;
    align-items: center;
    justify-content: center;
    width: 13px;
    border-left: 1px solid ${c.fieldEdge};
  }
`;

const Dot = styled.span`
  width: 8px;
  height: 8px;
  border-radius: 50%;
  background: #12a012;
`;

const ScrollX = styled.div`
  display: flex;
  align-items: center;
  justify-content: space-between;
  flex: 1;
  height: 12px;
  padding: 0 3px;
  background: #4a4a4a;
`;

const Thumb = styled.span`
  width: 55px;
  height: 11px;
  border-radius: 6px;
  background: #6c6c6c;
`;

const ResizeCorner = styled.span`
  width: 11px;
  height: 12px;
  background: linear-gradient(135deg, transparent 55%, #666 55%);
`;

function Document() {
  return (
    <DocColumn>
      <DocTabs>
        <DocTab>
          *Untitled-2 @ 50%
          <IconButton aria-label="Close document">
            <Icon n="closeBold" s={6} color="#fff" />
          </IconButton>
        </DocTab>
      </DocTabs>
      <DocBody>
        <RulerCorner />
        <HorizontalRuler />
        <VerticalRuler />
        <Canvas>
          <Pasteboard>
            <Sheet>
              <Margins />
              <Frame>
                {handles.map(([x, y, f]) => (
                  <Handle key={`${x}-${y}`} $x={x} $y={y} $fill={f} />
                ))}
                <Badge x={4} y={-4} />
              </Frame>
              <Badge x={5} y={-4} />
            </Sheet>
          </Pasteboard>
        </Canvas>
        <ScrollY>
          <Icon n="up" s={7} color="#686868" />
          <Icon n="down" s={7} color="#686868" />
        </ScrollY>
      </DocBody>
      <StatusBar>
        <SelectWrap $ml={10} $gap={4}>
          <PlainSelect aria-label="Zoom level" $w={26} defaultValue="50%">
            <option>50%</option>
          </PlainSelect>
          <Icon n="down" s={8} />
        </SelectWrap>
        <IconButton $w={22} aria-label="First page">
          <Icon n="firstP" s={7} color="#858585" />
        </IconButton>
        <IconButton $w={9} aria-label="Previous page">
          <Icon n="triL" s={6} color="#858585" />
        </IconButton>
        <PageField>
          <input aria-label="Page" defaultValue="1" />
          <button aria-label="Page list">
            <Icon n="down" s={8} />
          </button>
        </PageField>
        <IconButton $w={10} aria-label="Next page">
          <Icon n="triR" s={6} color="#858585" />
        </IconButton>
        <IconButton $w={20} aria-label="Last page">
          <Icon n="lastP" s={7} color="#858585" />
        </IconButton>
        <IconButton $w={22} aria-label="Open preflight">
          <Icon n="preflight" s={11} />
        </IconButton>
        <SelectWrap $ml={7} $mr={10}>
          <PlainSelect aria-label="Preflight profile" $w={74} defaultValue="a">
            <option value="a">[Basic] (working)</option>
          </PlainSelect>
          <Icon n="down" s={8} />
        </SelectWrap>
        <Dot />
        <SelectWrap $ml={4} $mr={2}>
          <PlainSelect aria-label="Errors" $w={46} defaultValue="a">
            <option value="a">No errors</option>
          </PlainSelect>
          <Icon n="down" s={8} />
        </SelectWrap>
        <ScrollX>
          <Icon n="left" s={7} />
          <Thumb />
          <Icon n="right" s={7} />
        </ScrollX>
        <IconButton $w={17} aria-label="Split layout">
          <Icon n="split" s={12} />
        </IconButton>
        <ResizeCorner />
      </StatusBar>
    </DocColumn>
  );
}

/* ---------- panels ---------- */

const Docks = styled.aside`
  display: flex;
  flex-direction: column;
  width: 356px;
  flex: none;
`;

const DockHead = styled.div`
  display: flex;
  align-items: center;
  justify-content: space-between;
  height: 10px;
  flex: none;
  padding: 0 5px 0 166px;
  background: ${c.dark};
`;

const DockTop = styled.div`
  display: flex;
  height: 441px;
  flex: none;
`;

const DockBottom = styled.div`
  display: flex;
  flex: 1;
  min-height: 0;
  border-top: 3px solid ${c.edge};
`;

const LeftStack = styled.div`
  display: flex;
  flex-direction: column;
  width: 154px;
  flex: none;
  overflow: hidden;
`;

const Panel = styled.section<{ $h?: number; $w?: number; $edge?: boolean }>`
  display: flex;
  flex-direction: column;
  flex: ${(p) => (p.$h || p.$w ? 'none' : '1')};
  height: ${(p) => (p.$h ? `${p.$h}px` : 'auto')};
  width: ${(p) => (p.$w ? `${p.$w}px` : 'auto')};
  min-width: 0;
  min-height: 0;
  border-right: ${(p) => (p.$edge ? `2px solid ${c.edge}` : '0')};
`;

const PanelTabs = styled.div`
  display: flex;
  align-items: center;
  height: 20px;
  flex: none;
  background: ${c.dark};
  > button:last-child:not(:first-child) {
    margin-left: auto;
  }
`;

const PanelTab = styled.button<{ $on?: boolean; $w?: number }>`
  display: flex;
  align-items: center;
  gap: 2px;
  width: ${(p) => (p.$w ? `${p.$w}px` : 'auto')};
  height: 20px;
  padding: 0 9px 0 4px;
  border-right: 1px solid #3e3e3e;
  background: ${(p) => (p.$on ? c.bg : 'none')};
  color: ${(p) => (p.$on ? '#f4f4f4' : '#b0b0b0')};
  font-size: 8px;
  font-weight: ${(p) => (p.$on ? 700 : 500)};
  white-space: nowrap;
  overflow: hidden;
`;

const LinkTab = styled(PanelTab)`
  padding: 0 0 0 8px;
`;

const ParentRow = styled.div`
  display: flex;
  justify-content: space-between;
  align-items: flex-start;
  height: 31px;
  padding-left: 2px;
  line-height: 14px;
`;

const Sheetlet = styled.span`
  width: 23px;
  height: 26px;
  background: #fff;
  border: 1px solid #9a9a9a;
  border-right: 0;
`;

const PageArea = styled.div`
  flex: 1;
  padding: 3px 0 0 12px;
  border-top: 2px solid #5f5f5f;
`;

const PageItem = styled.div`
  display: flex;
  flex-direction: column;
  align-items: center;
  width: 27px;
`;

const PageThumb = styled.span`
  width: 27px;
  height: 27px;
  border: 1px solid #b9d4ee;
  background: #94c1f4;
  text-align: center;
  line-height: 8px;
  b {
    display: inline-block;
    width: 9px;
    height: 8px;
    background: #fff;
    color: #111;
    vertical-align: top;
  }
`;

const PageNo = styled.span`
  width: 10px;
  height: 11px;
  margin: 4px 2px 0 0;
  background: #2a87ea;
  font-weight: 700;
  line-height: 11px;
  text-align: center;
`;

const PanelFoot = styled.div<{ $gap?: number; $pr?: number }>`
  display: flex;
  align-items: center;
  gap: ${(p) => p.$gap || 8}px;
  height: 17px;
  flex: none;
  padding: 0 ${(p) => p.$pr || 0}px 0 4px;
  border-top: 1px solid ${c.line};
  white-space: nowrap;
`;

const HalfIcon = styled.span`
  width: 4px;
  margin-left: 2px;
  overflow: hidden;
`;

const LayersBox = styled(Panel)`
  border-top: 2px solid ${c.edge};
`;

const LayerRow = styled.div`
  display: flex;
  align-items: center;
  height: 12px;
  margin-top: 2px;
  padding-left: 1px;
`;

const LayerName = styled.button`
  display: flex;
  align-items: center;
  flex: 1;
  gap: 1px;
  height: 12px;
  padding-left: 5px;
  margin-left: 14px;
  border-left: 3px solid #4f97f5;
  background: ${c.select};
  font-weight: 700;
`;

const LinksPanel = styled(Panel)`
  border: 2px solid ${c.edge};
  border-width: 1px 1px 1px 1px;
`;

const LinkTable = styled.table`
  width: 167px;
  border-collapse: collapse;
  table-layout: fixed;
  th, td {
    padding: 0;
    font-weight: 400;
    text-align: left;
    height: 16px;
    border-bottom: 1px solid ${c.line};
  }
  thead th {
    height: 18px;
    vertical-align: middle;
  }
  thead th:first-child {
    padding-left: 3px;
    font-weight: 700;
  }
  thead th + th {
    border-left: 1px solid #666;
  }
`;

const LinkCol = styled.col`
  width: 26px;
`;

const Centered = styled.div`
  display: flex;
  align-items: center;
  justify-content: center;
  gap: 1px;
`;

const LinkRow = styled.tr<{ $on?: boolean }>`
  td {
    background: ${(p) => (p.$on ? c.select : 'transparent')};
  }
  td:last-child {
    text-align: right;
    padding-right: 4px;
  }
`;

const LinkName = styled.div`
  display: flex;
  align-items: center;
  gap: 4px;
  height: 15px;
  &::before {
    content: '';
    width: 14px;
    height: 14px;
    background: #fff;
    border: 1px solid #aaa;
  }
`;

const PageRef = styled.a`
  color: #e09a35;
  font-size: 8px;
`;

const ListRest = styled.div`
  height: 34px;
`;

const LinkTools = styled.div`
  display: flex;
  align-items: center;
  gap: 10px;
  height: 22px;
  flex: none;
  padding: 0 17px 0 5px;
  border-top: 1px solid ${c.line};
  border-bottom: 1px solid #636363;
  span {
    flex: 1;
    white-space: nowrap;
  }
  svg:first-child {
    margin-right: -5px;
  }
`;

const InfoHead = styled.div`
  display: flex;
  align-items: center;
  gap: 11px;
  height: 21px;
  flex: none;
  padding: 0 9px 0 3px;
  border-bottom: 1px solid ${c.line};
  h2 {
    flex: 1;
    font-size: 8px;
    font-weight: 700;
  }
`;

const InfoBody = styled.div`
  display: flex;
  flex: 1;
  min-height: 0;
`;

const InfoList = styled.dl`
  flex: 1;
`;

const InfoRow = styled.div`
  position: relative;
  display: grid;
  grid-template-columns: 58px 1fr;
  column-gap: 2px;
  height: 16px;
  line-height: 16px;
  white-space: nowrap;
  dt {
    text-align: right;
    font-weight: 700;
  }
`;

const InfoScroll = styled.div`
  display: flex;
  flex-direction: column;
  align-items: center;
  width: 9px;
  height: 269px;
  background: #4b4b4b;
  i {
    flex: 1;
    width: 7px;
    margin: 1px 0 4px;
    border-radius: 4px;
    background: #6a6a6a;
  }
`;

const PanelGrip = styled.div`
  display: flex;
  justify-content: center;
  height: 5px;
  border-top: 1px solid ${c.edge};
  &::after {
    content: '';
    width: 14px;
    height: 3px;
    background: #404040;
  }
`;

const info: [string, string][] = [
  ['Name', 'SAVE_AS_100PPI.jpg'],
  ['Format', 'JPEG'],
  ['Page', '1'],
  ['Colour Space', 'RGB'],
  ['Status', 'OK'],
  ['Size', '17.2 KB (17581 bytes)'],
  ['ICC Profile', 'sRGB IEC61966-2.1'],
  ['Actual PPI', '100'],
  ['Effective PPI', '100'],
  ['Dimensions', '1024 x 1024'],
  ['Creator', 'Adobe Photoshop CS6 (Windows)'],
  ['Place Date', '17 March 2024 22:24'],
  ['Layer', 'Layer 1'],
  ['Modified', '17 March 2024 21:17'],
  ['Path', 'C:\\temp\\SAVE_AS_100PPI.jpg'],
  ['Creation Date', '17 March 2024 21:17'],
  ['Transparency', 'No'],
];

const TabMark = () => <Icon n="spin" s={7} />;

function PagesPanel() {
  return (
    <Panel $h={237}>
      <PanelTabs>
        <PanelTab $on>
          <TabMark />
          Pages
        </PanelTab>
      </PanelTabs>
      <Gap $h={3} />
      <ParentRow>
        [None]
        <Sheetlet />
      </ParentRow>
      <ParentRow>
        A-Parent
        <Sheetlet />
      </ParentRow>
      <PageArea>
        <PageItem>
          <Svg viewBox="0 0 8 5" width={8} height={5} aria-hidden="true">
            <path d="M0 0h8L4 4z" {...solid} />
          </Svg>
          <PageThumb>
            <b>A</b>
          </PageThumb>
          <PageNo>1</PageNo>
        </PageItem>
      </PageArea>
      <PanelFoot $gap={9}>
        1 Page in 1 Spread
        <Spacer />
        <Icon n="pageSize" s={12} />
        <Icon n="plus" s={9} />
        <HalfIcon>
          <Icon n="trash" s={9} />
        </HalfIcon>
      </PanelFoot>
    </Panel>
  );
}

function LayersPanel() {
  return (
    <LayersBox>
      <PanelTabs>
        <PanelTab $on>
          <TabMark />
          Layers
        </PanelTab>
      </PanelTabs>
      <LayerRow>
        <IconButton aria-label="Toggle visibility">
          <Icon n="eye" s={9} />
        </IconButton>
        <LayerName>
          <Icon n="right" s={8} />
          Layer 1
        </LayerName>
      </LayerRow>
      <Spacer />
      <PanelFoot $gap={9}>
        Page: 1, 1 Layer
        <Spacer />
        <Icon n="plus" s={9} />
        <HalfIcon>
          <Icon n="trash" s={9} />
        </HalfIcon>
      </PanelFoot>
    </LayersBox>
  );
}

function Links() {
  return (
    <LinksPanel>
      <PanelTabs>
        <LinkTab $on $w={37}>Links</LinkTab>
        <LinkTab $w={38}>Stroke</LinkTab>
        <LinkTab $w={39}>Gradien</LinkTab>
        <LinkTab $w={39}>CC Libra</LinkTab>
        <IconButton $w={36} aria-label="More tabs">
          <Icon n="more" s={8} />
          <Divider $h={8} $l={5} $r={4} />
          <Icon n="panelMenu" s={8} color="#999" />
        </IconButton>
      </PanelTabs>
      <LinkTable>
        <colgroup>
          <col />
          <LinkCol />
          <LinkCol />
        </colgroup>
        <thead>
          <tr>
            <th>Name</th>
            <th aria-label="Status">
              <Centered>
                <Icon n="warn" s={10} color="#999" />
              </Centered>
            </th>
            <th aria-label="Page">
              <Centered>
                <Icon n="page" s={11} />
                <Icon n="triUp" s={5} />
              </Centered>
            </th>
          </tr>
        </thead>
        <tbody>
          <LinkRow $on>
            <td colSpan={2}>
              <LinkName>SAVE_AS_100PPI.jpg</LinkName>
            </td>
            <td>
              <PageRef href="#page-1">1</PageRef>
            </td>
          </LinkRow>
          <LinkRow>
            <td colSpan={2}>
              <LinkName>SAVE_FO...B_100PPI.jpg</LinkName>
            </td>
            <td>
              <PageRef href="#page-1">1</PageRef>
            </td>
          </LinkRow>
        </tbody>
      </LinkTable>
      <ListRest />
      <LinkTools>
        <Icon n="down" s={7} />
        <span>1 Selected</span>
        <Icon n="cloudLink" s={13} />
        <Icon n="chain" s={11} />
        <Icon n="goTo" s={11} />
        <Icon n="refresh" s={10} color="#8a8a8a" />
        <Icon n="edit" s={9} color="#ddd" />
      </LinkTools>
      <InfoHead>
        <h2>Link Info</h2>
        <Icon n="triL" s={6} />
        <Icon n="triR" s={6} />
      </InfoHead>
      <InfoBody>
        <InfoList>
          {info.map(([k, v]) => (
            <InfoRow key={k}>
              <dt>{k}:</dt>
              <dd>{v}</dd>
              {k === 'Name' && <RedBox $t={-5} $r={50} $b={-3} $l={23} />}
              {k === 'Effective PPI' && <RedBox $t={-17} $r={83} $b={-17} $l={-6} />}
            </InfoRow>
          ))}
        </InfoList>
        <InfoScroll>
          <Icon n="up" s={7} color="#888" />
          <i />
          <Icon n="down" s={7} color="#888" />
        </InfoScroll>
      </InfoBody>
      <PanelGrip />
    </LinksPanel>
  );
}

const SwatchHead = styled.div`
  display: flex;
  align-items: center;
  height: 29px;
  flex: none;
  padding: 0 21px 0 5px;
  gap: 8px;
`;

const TintField = styled.label`
  display: flex;
  align-items: center;
  gap: 3px;
`;

const TintBox = styled.span`
  display: flex;
  align-items: center;
  width: 39px;
  height: 16px;
  margin-left: 1px;
  padding-right: 3px;
  background: #5f5f5f;
  input {
    flex: 1;
    width: 0;
  }
`;

const Rows = styled.ul<{ $h: number }>`
  display: grid;
  grid-auto-rows: 1fr;
  height: ${(p) => p.$h}px;
`;

const Row = styled.li<{ $on?: boolean; $pl: number }>`
  display: flex;
  align-items: center;
  gap: 3px;
  padding: 0 11px 0 ${(p) => p.$pl}px;
  border-bottom: 1px solid #5b5b5b;
  background: ${(p) => (p.$on ? c.select : 'none')};
  font-weight: ${(p) => (p.$on ? 700 : 400)};
  span {
    flex: 1;
    padding-left: 1px;
    white-space: nowrap;
  }
`;

const Chip = styled.i<{ $c: string }>`
  width: 7px;
  height: 7px;
  border: 1px solid #333;
  background: ${(p) => p.$c};
`;

const GreyBox = styled.i`
  width: 9px;
  height: 9px;
  border: 1px solid #c4c4c4;
  background: #8a8a8a;
`;

const RgbBox = styled(GreyBox)`
  background: linear-gradient(90deg, #e33 33%, #2a9c3a 33% 66%, #27f 66%);
`;

const Marks = styled.div`
  display: grid;
  grid-template-columns: repeat(3, 9px);
  column-gap: 3px;
`;

const swatches: [string, string, string][] = [
  ['[None]', 'none', 'en'],
  ['[Registration]', '#000', 'eg'],
  ['[Paper]', '#fff', ''],
  ['[Black]', '#000', 'exr'],
  ['RGB Cyan', '#0ff', 'xr'],
  ['RGB Magenta', '#f0f', 'xr'],
  ['RGB Yellow', '#ff0', 'xr'],
  ['RGB Red', '#f00', 'xr'],
  ['RGB Green', '#0f0', 'xr'],
  ['RGB Blue', '#00f', 'xr'],
];

function Swatches() {
  return (
    <Panel $w={178} $edge>
      <PanelTabs>
        <PanelTab $on $w={58}>
          <TabMark />
          Swatches
        </PanelTab>
        <IconButton $w={18} aria-label="Swatches menu">
          <Icon n="panelMenu" s={9} color="#999" />
        </IconButton>
      </PanelTabs>
      <SwatchHead>
        <FillStroke>
          <NoneSwatch s={14} ring />
          <NoneSwatch s={15} />
        </FillStroke>
        <IconButton $on $w={13} $h={14} aria-label="Container">
          <Icon n="square" s={7} />
        </IconButton>
        <IconButton aria-label="Text">
          <Icon n="type" s={7} color="#999" />
        </IconButton>
        <Spacer />
        <TintField>
          Tint:
          <TintBox>
            <input aria-label="Tint" />
            <Icon n="right" s={8} />
          </TintBox>
          %
        </TintField>
      </SwatchHead>
      <Rows $h={117}>
        {swatches.map(([name, col, marks], i) => (
          <Row key={name} $on={i === 0} $pl={15}>
            {col === 'none' ? <NoneSwatch s={7} edge="#333" slash={4} /> : <Chip $c={col} />}
            <span>{name}</span>
            <Marks>
              {marks.includes('e') ? <Icon n="noEdit" s={9} /> : <b />}
              {marks.includes('x') ? <GreyBox /> : <b />}
              {marks.includes('r') && <RgbBox />}
              {marks.includes('n') && <NoneSwatch s={9} edge="#444" />}
              {marks.includes('g') && <Icon n="registration" s={9} />}
            </Marks>
          </Row>
        ))}
      </Rows>
      <Spacer />
      <PanelFoot $gap={11} $pr={17}>
        <Icon n="importIcon" s={10} color="#888" />
        <Spacer />
        <Icon n="swatchView" s={9} />
        <Icon n="folder" s={10} />
        <Icon n="plus" s={9} color="#777" />
        <Icon n="trash" s={10} color="#777" />
      </PanelFoot>
    </Panel>
  );
}

const StyleHead = styled.div`
  display: flex;
  align-items: center;
  justify-content: space-between;
  height: 19px;
  flex: none;
  padding: 0 7px 0 3px;
`;

const StyleRow = styled(Row)`
  padding-right: 7px;
`;

function ObjectStyles() {
  return (
    <Panel>
      <PanelTabs>
        <PanelTab $on $w={71}>
          <TabMark />
          Object Styles
        </PanelTab>
        <IconButton $w={20} aria-label="Object styles menu">
          <Icon n="panelMenu" s={9} color="#999" />
        </IconButton>
      </PanelTabs>
      <StyleHead>
        [None]
        <Icon n="bolt" s={9} />
      </StyleHead>
      <Rows $h={35}>
        <StyleRow $on $pl={25}>
          <span>[None]</span>
          <Icon n="noEdit" s={9} />
        </StyleRow>
        <StyleRow $pl={25}>
          <span>[Basic Graphics Frame]</span>
          <Icon n="frameG" s={9} />
        </StyleRow>
        <StyleRow $pl={25}>
          <span>[Basic Text Frame]</span>
          <Icon n="frameT" s={9} />
        </StyleRow>
      </Rows>
      <Spacer />
      <PanelFoot $gap={10} $pr={18}>
        <Spacer />
        <Icon n="folder" s={11} />
        <Line>
          <Icon n="clearO" s={10} />
          <Icon n="undo" s={6} />
        </Line>
        <Line>
          <Icon n="frameDots" s={8} color="#888" />
          <Icon n="bolt" s={6} color="#777" />
        </Line>
        <Icon n="plus" s={9} />
        <Icon n="trash" s={10} color="#777" />
      </PanelFoot>
    </Panel>
  );
}

const IconDock = styled.aside`
  display: flex;
  flex-direction: column;
  align-items: stretch;
  width: 28px;
  flex: none;
  border-left: 2px solid ${c.edge};
  border-right: 1px solid ${c.line};
`;

const IconDockHead = styled(ToolHead)`
  justify-content: flex-end;
  padding-right: 4px;
`;

const DockGroup = styled.div`
  display: flex;
  flex-direction: column;
  align-items: center;
  gap: 4px;
  padding-bottom: 4px;
  border-bottom: 1px solid ${c.edge};
  > span {
    margin: 3px 0 0;
  }
`;

const DockButton = ({ n }: { n: string }) => (
  <IconButton $w={20} $h={16} $on={n === 'chain'} aria-label={n}>
    {n === 'fx' ? <Fx $size={12}>fx</Fx> : n === 'gradient' ? <GradientIcon /> : <Icon n={n} s={n === 'chain' ? 15 : 12} />}
  </IconButton>
);

const dockGroups = [['chain', 'strokeLines', 'gradient', 'book'], ['fx'], ['align', 'pathfinder', 'transformBox']];

const menus: [string, string, string][] = [
  ['', 'F', 'ile'], ['', 'E', 'dit'], ['', 'L', 'ayout'], ['', 'T', 'ype'], ['', 'O', 'bject'],
  ['T', 'a', 'ble'], ['', 'V', 'iew'], ['', 'P', 'lug-Ins'], ['', 'W', 'indow'], ['', 'H', 'elp'],
];

export default function App() {
  return (
    <Shell>
      <GlobalStyle />
      <TitleBar>
        <Logo>Id</Logo>
        <IconButton aria-label="Home">
          <Icon n="home" s={14} color="#d0d0d0" />
        </IconButton>
        <MenuBar>
          {menus.map(([a, b, d]) => (
            <MenuButton key={a + b + d}>
              {a}
              <u>{b}</u>
              {d}
            </MenuButton>
          ))}
        </MenuBar>
        <Spacer />
        <IconButton aria-label="Learn">
          <Icon n="bulb" s={14} color="#ccc" />
        </IconButton>
        <Share>Share</Share>
        <Divider $h={15} />
        <SelectWrap $ml={7} $mr={7}>
          <PlainSelect aria-label="Workspace" $size={9} $w={46} defaultValue="a">
            <option value="a">Advanced</option>
          </PlainSelect>
          <Icon n="down" s={8} />
        </SelectWrap>
        <Divider $h={15} />
        <SearchBox>
          <Icon n="search" s={10} color="#2a8cf0" />
          <Icon n="down" s={4} color="#2a8cf0" />
          <input type="search" aria-label="Search Adobe Stock" placeholder="Adobe Stock" />
        </SearchBox>
        <WindowButtons>
          <IconButton $w={20} aria-label="Minimise">
            <Icon n="min" s={10} color="#ddd" />
          </IconButton>
          <IconButton $w={20} aria-label="Maximise">
            <Icon n="max" s={9} color="#ddd" />
          </IconButton>
          <IconButton $w={34} aria-label="Close">
            <Icon n="close" s={9} color="#ddd" />
          </IconButton>
        </WindowButtons>
      </TitleBar>
      <Controls />
      <Workspace>
        <Tools />
        <Document />
        <Docks>
          <DockHead>
            <Icon n="more" s={7} />
            <Icon n="more" s={7} />
          </DockHead>
          <DockTop>
            <LeftStack>
              <PagesPanel />
              <LayersPanel />
            </LeftStack>
            <Links />
          </DockTop>
          <DockBottom>
            <Swatches />
            <ObjectStyles />
          </DockBottom>
        </Docks>
        <IconDock>
          <IconDockHead>
            <Icon n="less" s={7} />
          </IconDockHead>
          {dockGroups.map((g) => (
            <DockGroup key={g[0]}>
              <GripH />
              {g.map((n) => (
                <DockButton key={n} n={n} />
              ))}
            </DockGroup>
          ))}
        </IconDock>
      </Workspace>
    </Shell>
  );
}
